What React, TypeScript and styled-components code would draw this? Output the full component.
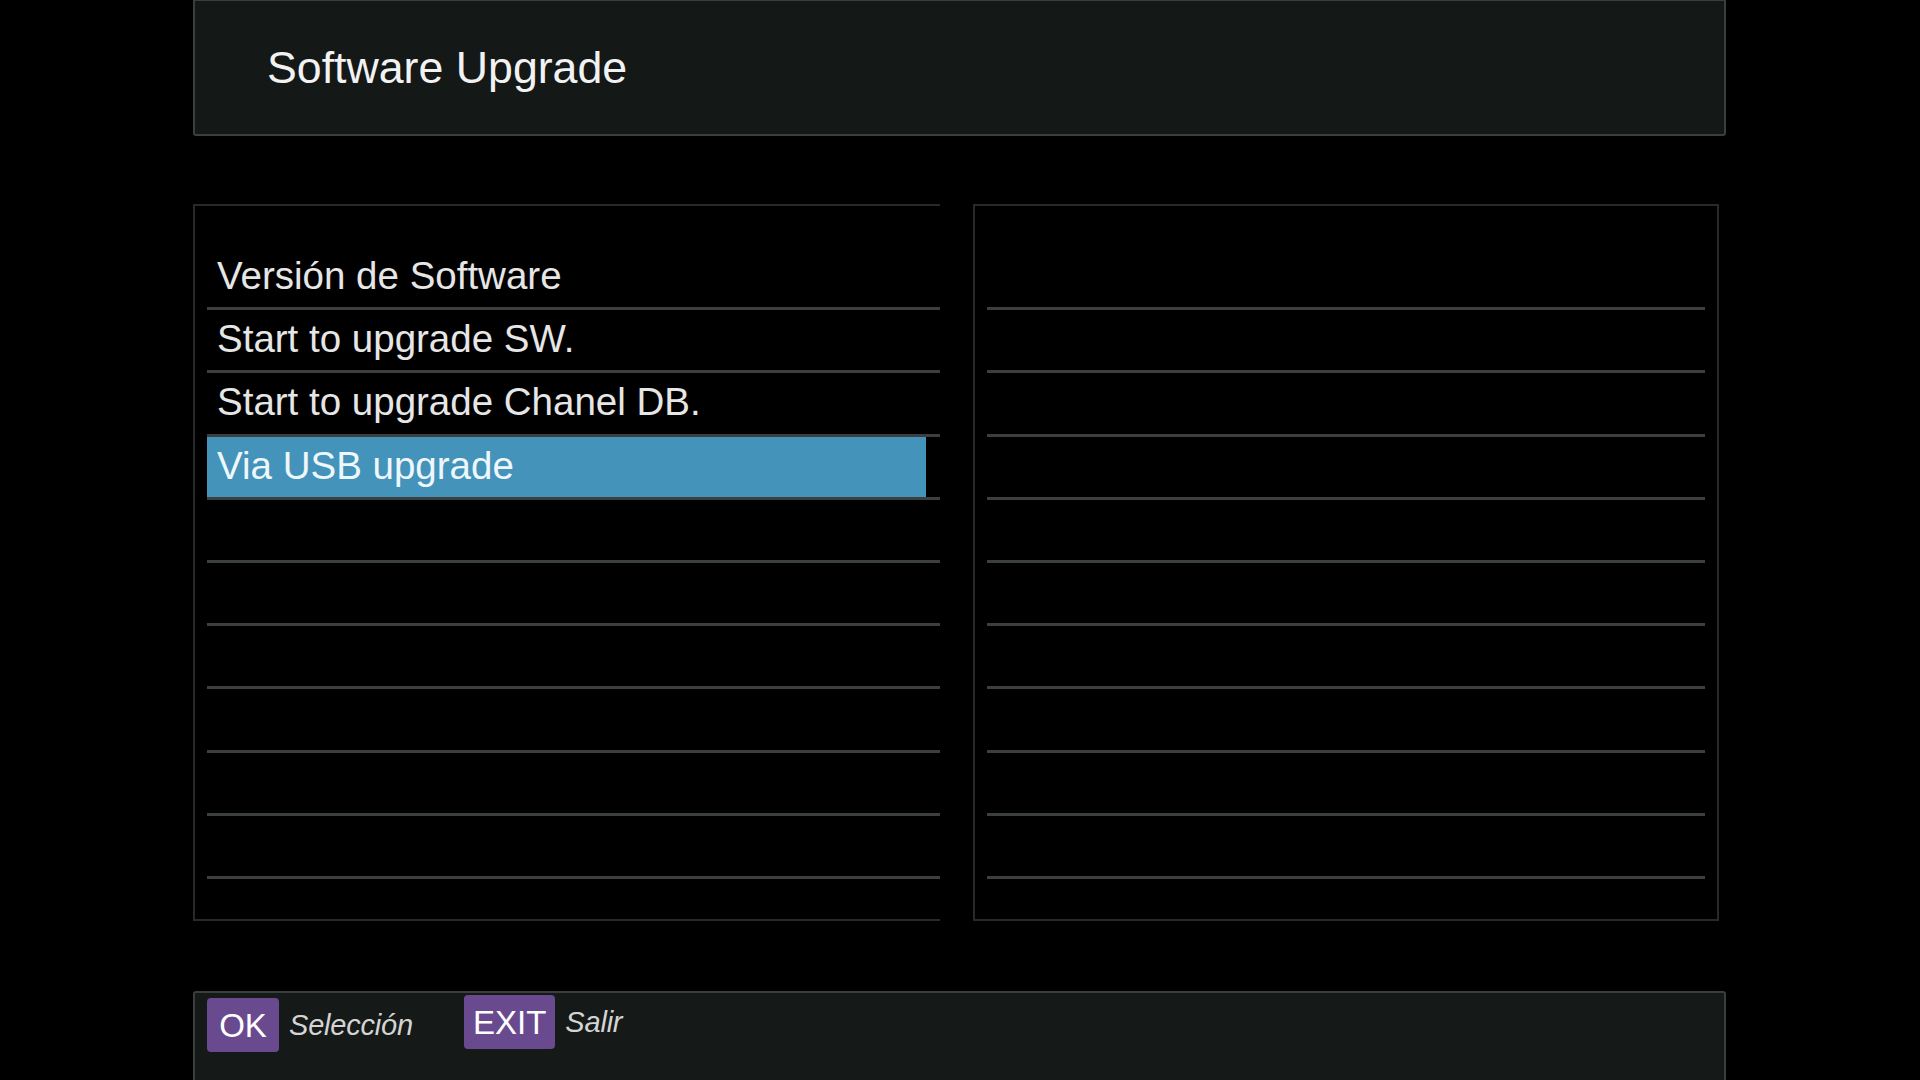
import React from 'react';
import styled, { createGlobalStyle } from 'styled-components';

const GlobalStyle = createGlobalStyle`
  html, body {
    margin: 0;
    padding: 0;
    background: #000000;
  }
  body {
    font-family: "Liberation Sans", Arial, sans-serif;
    overflow: hidden;
  }
`;

const Screen = styled.div`
  width: 1920px;
  height: 1080px;
  background: #000000;
  display: flex;
  flex-direction: column;
  padding-left: 193px;
  box-sizing: border-box;
  overflow: hidden;
`;

const Header = styled.div`
  width: 1533px;
  height: 136px;
  flex-shrink: 0;
  box-sizing: border-box;
  background: #141817;
  border: 2px solid #3a3e3d;
  border-top-width: 1px;
  border-radius: 0 0 3px 3px;
  padding-left: 72px;
  display: flex;
  align-items: center;
`;

const Title = styled.h1`
  margin: 0;
  padding-top: 1px;
  font-size: 44.7px;
  font-weight: normal;
  color: #f2f2f2;
  line-height: 1;
`;

const Panels = styled.div`
  margin-top: 68px;
  display: flex;
  gap: 33px;
  height: 717px;
  flex-shrink: 0;
`;

const Panel = styled.div<{ $open?: boolean }>`
  width: ${(p) => (p.$open ? '747px' : '746px')};
  height: 100%;
  box-sizing: border-box;
  border: 2px solid #282a2a;
  border-right: ${(p) => (p.$open ? 'none' : '2px solid #282a2a')};
  padding: 41px ${(p) => (p.$open ? '0' : '12px')} 0 12px;
  display: flex;
  flex-direction: column;
`;

const Row = styled.div`
  height: 63.2px;
  flex-shrink: 0;
  box-sizing: border-box;
  border-bottom: 3px solid #3b3f40;
  display: flex;
`;

const Item = styled.div<{ $selected?: boolean }>`
  flex: 1;
  margin-right: ${(p) => (p.$selected ? '14px' : '0')};
  padding-left: 10px;
  background: ${(p) => (p.$selected ? '#4393ba' : 'transparent')};
  color: ${(p) => (p.$selected ? '#eef7fb' : '#e6e6e6')};
  font-size: 38.5px;
  line-height: 57px;
  white-space: nowrap;
`;

const Footer = styled.div`
  margin-top: 70px;
  width: 1533px;
  height: 100px;
  flex-shrink: 0;
  box-sizing: border-box;
  background: #151918;
  border: 2px solid #3a3e3d;
  border-radius: 3px 3px 0 0;
  padding: 3px 0 0 12px;
  display: flex;
  align-items: flex-start;
`;

const Hint = styled.div<{ $lift?: number }>`
  display: flex;
  align-items: center;
  gap: 10px;
  margin-right: 51px;
  margin-top: ${(p) => (p.$lift ? 2 - p.$lift : 2)}px;
`;

const Key = styled.span`
  display: inline-flex;
  align-items: center;
  justify-content: center;
  height: 54px;
  padding: 0 9px;
  min-width: 54px;
  border-radius: 4px;
  background: #6a4a8f;
  color: #ffffff;
  font-size: 33px;
  line-height: 1;
`;

const Label = styled.span`
  color: #d4d4d4;
  font-style: italic;
  font-size: 29px;
  letter-spacing: -0.2px;
`;

const menu = [
  'Versión de Software',
  'Start to upgrade SW.',
  'Start to upgrade Chanel DB.',
  'Via USB upgrade',
];
const selected = 3;
const ROWS = 10;

export default function App() {
  return (
    <>
      <GlobalStyle />
      <Screen>
        <Header>
          <Title>Software Upgrade</Title>
        </Header>
        <Panels>
          <Panel $open>
            {Array.from({ length: ROWS }).map((_, i) => (
              <Row key={i}>
                <Item $selected={i === selected}>{menu[i] ?? ''}</Item>
              </Row>
            ))}
          </Panel>
          <Panel>
            {Array.from({ length: ROWS }).map((_, i) => (
              <Row key={i} />
            ))}
          </Panel>
        </Panels>
        <Footer>
          <Hint>
            <Key>OK</Key>
            <Label>Selección</Label>
          </Hint>
          <Hint $lift={3}>
            <Key>EXIT</Key>
            <Label>Salir</Label>
          </Hint>
        </Footer>
      </Screen>
    </>
  );
}
